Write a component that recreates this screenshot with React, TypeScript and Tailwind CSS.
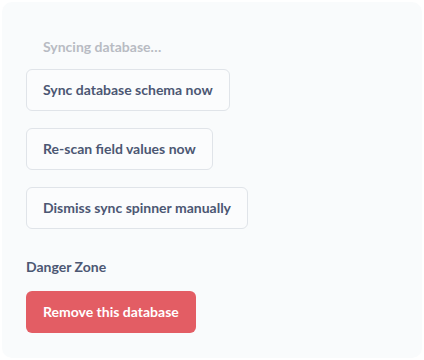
import React from 'react';

const actions = ['Sync database schema now', 'Re-scan field values now', 'Dismiss sync spinner manually'];

export default function App() {
  return (
    <div className="w-[424px] h-[360px] bg-white p-[2px]" style={{ fontFamily: 'Lato, "Open Sans", sans-serif' }}>
      <div className="h-[356px] w-[420px] rounded-[10px] bg-[#f9fbfc] px-6 pt-[33px]">
        <div className="pl-[17px] text-sm font-bold leading-[24px] text-[#b8bbc3]">Syncing database…</div>
        <div className="mt-[10px] flex flex-col items-start gap-[17px]">
          {actions.map((label) => (
            <button
              key={label}
              className="h-[42px] rounded-md border border-[#e0e4e9] bg-[#fbfcfd] px-4 text-sm font-bold text-[#4c5773]"
            >
              {label}
            </button>
          ))}
        </div>
        <div className="mt-[28px] text-sm font-bold leading-5 text-[#4c5773]">Danger Zone</div>
        <button className="mt-[14px] h-[42px] rounded-md bg-[#e35d64] px-[17px] text-sm font-bold text-white">
          Remove this database
        </button>
      </div>
    </div>
  );
}
